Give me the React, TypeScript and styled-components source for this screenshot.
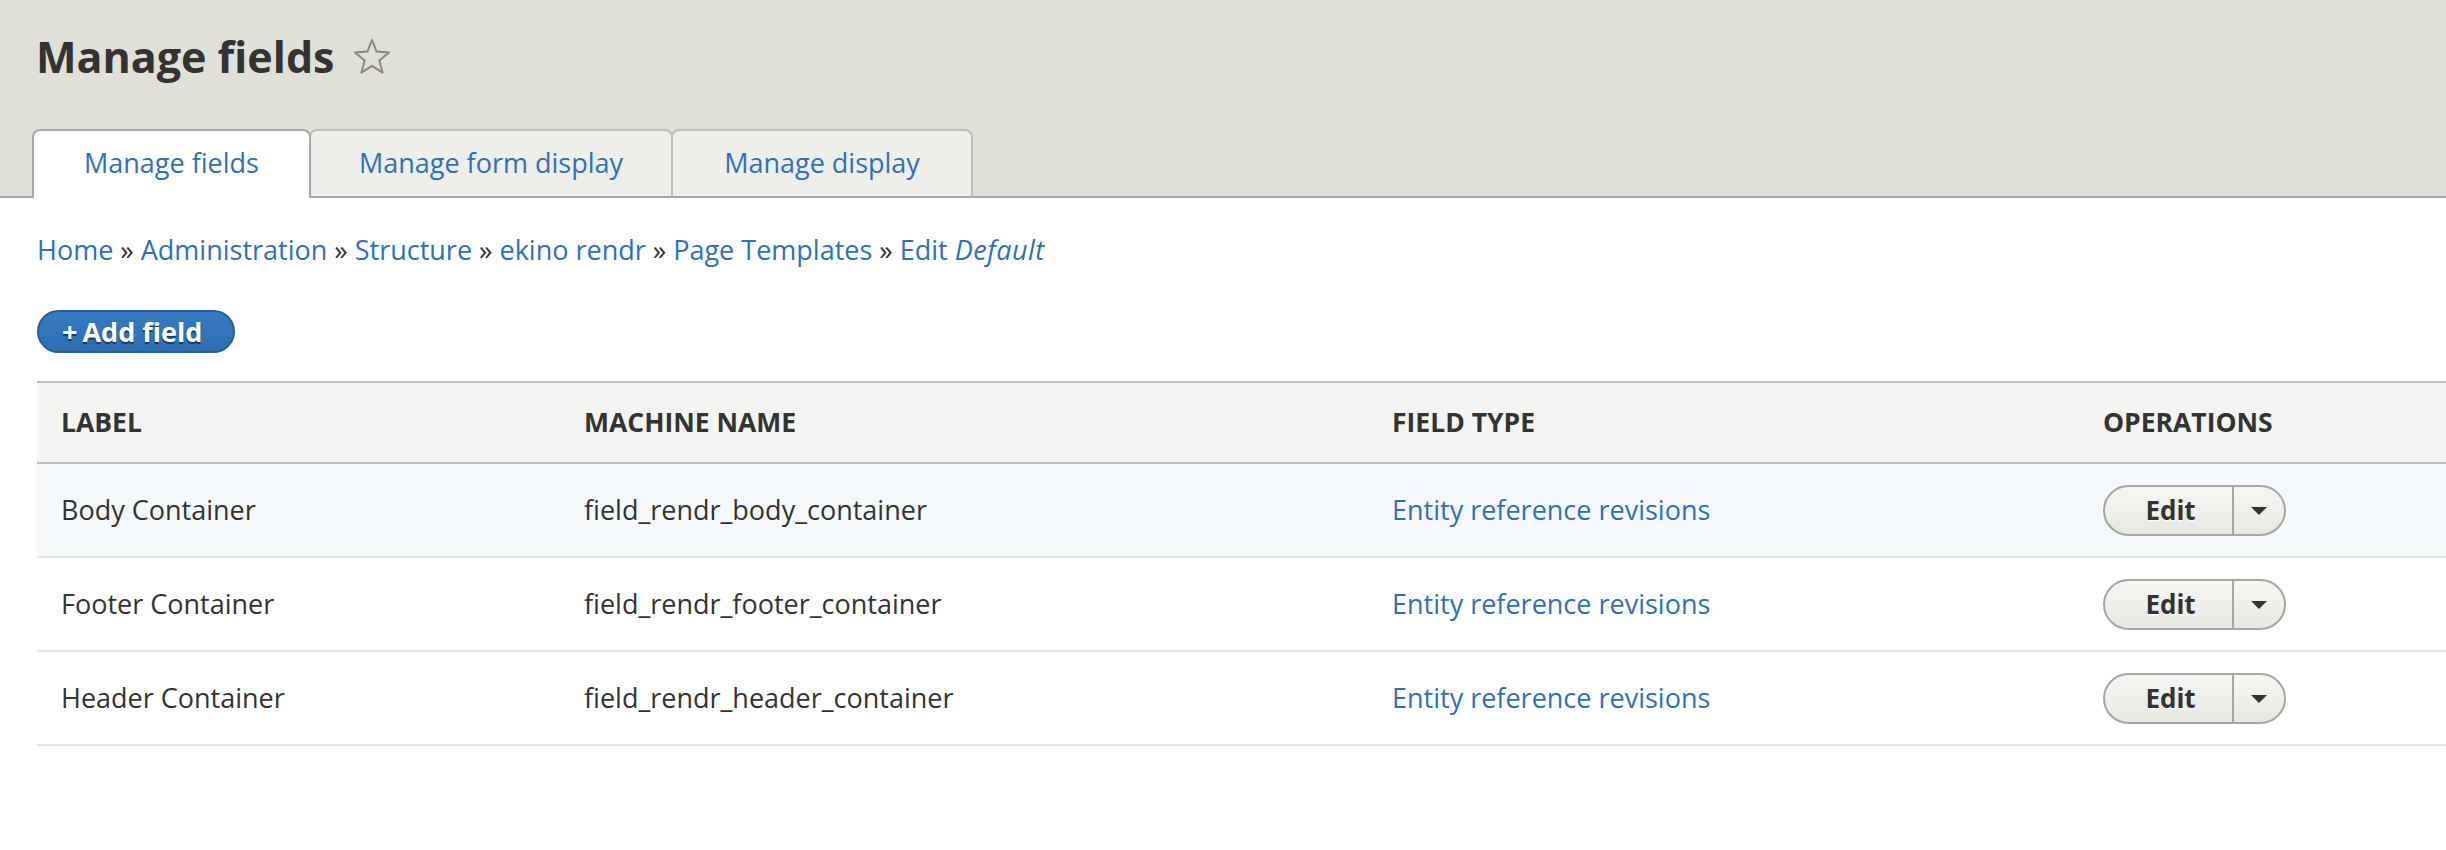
import React from 'react'
import styled, { createGlobalStyle } from 'styled-components'

const GlobalStyle = createGlobalStyle`
  html, body {
    margin: 0;
    padding: 0;
    background: #fff;
    overflow: hidden;
  }
  body {
    font-family: 'Open Sans', 'Noto Sans', 'DejaVu Sans', sans-serif;
    font-size: 27px;
    line-height: 36px;
    color: #333;
  }
`

const LINK = '#2e71b8'

const rows = [
  { label: 'Body Container', machine: 'field_rendr_body_container', highlight: true },
  { label: 'Footer Container', machine: 'field_rendr_footer_container', highlight: false },
  { label: 'Header Container', machine: 'field_rendr_header_container', highlight: false },
]

const tabs = [
  { title: 'Manage fields', width: 279 },
  { title: 'Manage form display', width: 364 },
  { title: 'Manage display', width: 302 },
]

const crumbs = ['Home', 'Administration', 'Structure', 'ekino rendr', 'Page Templates']

const StarIcon: React.FC = () => (
  <svg width="38" height="37" viewBox="0 0 38 37">
    <polygon
      points="19,2 23.6,13.6 36,14.4 26.4,22.4 29.6,34.6 19,27.8 8.4,34.6 11.6,22.4 2,14.4 14.4,13.6"
      fill="none"
      stroke="#8c8a78"
      strokeWidth="2"
      strokeLinejoin="round"
    />
  </svg>
)

const App: React.FC = () => {
  return (
    <>
      <GlobalStyle />
      <Header>
        <Title>
          Manage fields
          <StarIcon />
        </Title>
        <TabBar>
          {tabs.map((t, i) => (
            <Tab key={t.title} active={i === 0} width={t.width}>
              {t.title}
            </Tab>
          ))}
        </TabBar>
      </Header>
      <Content>
        <Breadcrumb>
          {crumbs.map((c) => (
            <React.Fragment key={c}>
              <Crumb>{c}</Crumb>
              <Sep> » </Sep>
            </React.Fragment>
          ))}
          <Crumb>
            Edit <Em>Default</Em>
          </Crumb>
        </Breadcrumb>
        <AddButton>
          <Plus>+</Plus>Add field
        </AddButton>
        <FieldTable>
          <colgroup>
            <col style={{ width: 523 }} />
            <col style={{ width: 808 }} />
            <col style={{ width: 711 }} />
            <col />
          </colgroup>
          <thead>
            <tr>
              <Th>Label</Th>
              <Th>Machine name</Th>
              <Th>Field type</Th>
              <Th>Operations</Th>
            </tr>
          </thead>
          <tbody>
            {rows.map((r) => (
              <Row key={r.machine} highlight={r.highlight}>
                <Td>{r.label}</Td>
                <Td>{r.machine}</Td>
                <Td>
                  <Crumb>Entity reference revisions</Crumb>
                </Td>
                <Td>
                  <DropButton>
                    <DropMain>Edit</DropMain>
                    <DropToggle>
                      <Arrow />
                    </DropToggle>
                  </DropButton>
                </Td>
              </Row>
            ))}
          </tbody>
        </FieldTable>
      </Content>
    </>
  )
}

const Header = styled.header`
  background: #e0e0d8;
  padding-top: 31px;
`

const Title = styled.h1`
  margin: 0 0 47px 36px;
  display: flex;
  align-items: center;
  gap: 19px;
  font-size: 43px;
  line-height: 51px;
  font-weight: 700;
  color: #333;
`

const TabBar = styled.nav`
  display: flex;
  align-items: flex-end;
  padding-left: 32px;
  border-bottom: 2px solid #a6a6a6;
`

const Tab = styled.a<{ active: boolean; width: number }>`
  position: relative;
  display: block;
  box-sizing: border-box;
  width: ${(p) => p.width}px;
  padding: 14px 0 ${(p) => (p.active ? '17px' : '15px')};
  margin-bottom: ${(p) => (p.active ? '-2px' : '0')};
  margin-left: -2px;
  &:first-child {
    margin-left: 0;
  }
  z-index: ${(p) => (p.active ? 1 : 0)};
  border: 2px solid ${(p) => (p.active ? '#a6a6a6' : '#bfbfba')};
  border-bottom: none;
  border-radius: 8px 8px 0 0;
  background: ${(p) => (p.active ? '#fff' : '#eeeeeb')};
  color: ${LINK};
  font-size: 27px;
  line-height: 36px;
  text-align: center;
  white-space: nowrap;
`

const Content = styled.main`
  padding-left: 37px;
`

const Breadcrumb = styled.div`
  margin-top: 34px;
  font-size: 27px;
  line-height: 36px;
  white-space: nowrap;
`

const Crumb = styled.a`
  color: ${LINK};
  text-decoration: none;
`

const Em = styled.em`
  letter-spacing: 0.5px;
`

const Sep = styled.span`
  color: #333;
`

const AddButton = styled.a`
  display: inline-flex;
  align-items: center;
  box-sizing: border-box;
  height: 43px;
  margin-top: 42px;
  padding: 1px 31px 0 23px;
  border: 2px solid #2b5d93;
  border-radius: 22px;
  background: linear-gradient(#347ac1, #2d6fb4);
  color: #fff;
  font-size: 27px;
  font-weight: 700;
  line-height: 38px;
  text-shadow: 0 2px 1px rgba(0, 0, 0, 0.5);
`

const Plus = styled.span`
  margin-right: 5px;
`

const FieldTable = styled.table`
  margin-top: 28px;
  width: 100%;
  border-collapse: collapse;
  table-layout: fixed;
  border-top: 2px solid #bebebe;
`

const Th = styled.th`
  padding: 21px 24px 22px;
  background: #f4f4f2;
  border-bottom: 2px solid #bfbfba;
  text-align: left;
  text-transform: uppercase;
  font-weight: 700;
  font-size: 26.5px;
  line-height: 36px;
  color: #333;
`

const Row = styled.tr<{ highlight: boolean }>`
  background: ${(p) => (p.highlight ? '#f6f9fc' : '#fff')};
  border-bottom: 2px solid #e6e4df;
`

const Td = styled.td`
  height: 94px;
  padding: 0 24px;
  box-sizing: border-box;
  vertical-align: middle;
  font-size: 27px;
  line-height: 36px;
  white-space: nowrap;
`

const DropButton = styled.div`
  display: inline-flex;
  box-sizing: border-box;
  width: 183px;
  height: 51px;
  border: 2px solid #a6a6a6;
  border-radius: 26px;
  background: linear-gradient(#f6f6f3, #e8e8e3);
  overflow: hidden;
  vertical-align: middle;
`

const DropMain = styled.span`
  width: 129px;
  display: flex;
  align-items: center;
  justify-content: center;
  font-weight: 700;
  font-size: 26px;
  color: #333;
  text-shadow: 0 1px 0 #fff;
  border-right: 2px solid #a6a6a6;
  padding-left: 4px;
  box-sizing: border-box;
`

const DropToggle = styled.span`
  flex: 1;
  display: flex;
  align-items: center;
  justify-content: center;
`

const Arrow = styled.span`
  width: 0;
  height: 0;
  border-left: 8px solid transparent;
  border-right: 8px solid transparent;
  border-top: 8px solid #333;
  margin-top: 2px;
`

export default App
